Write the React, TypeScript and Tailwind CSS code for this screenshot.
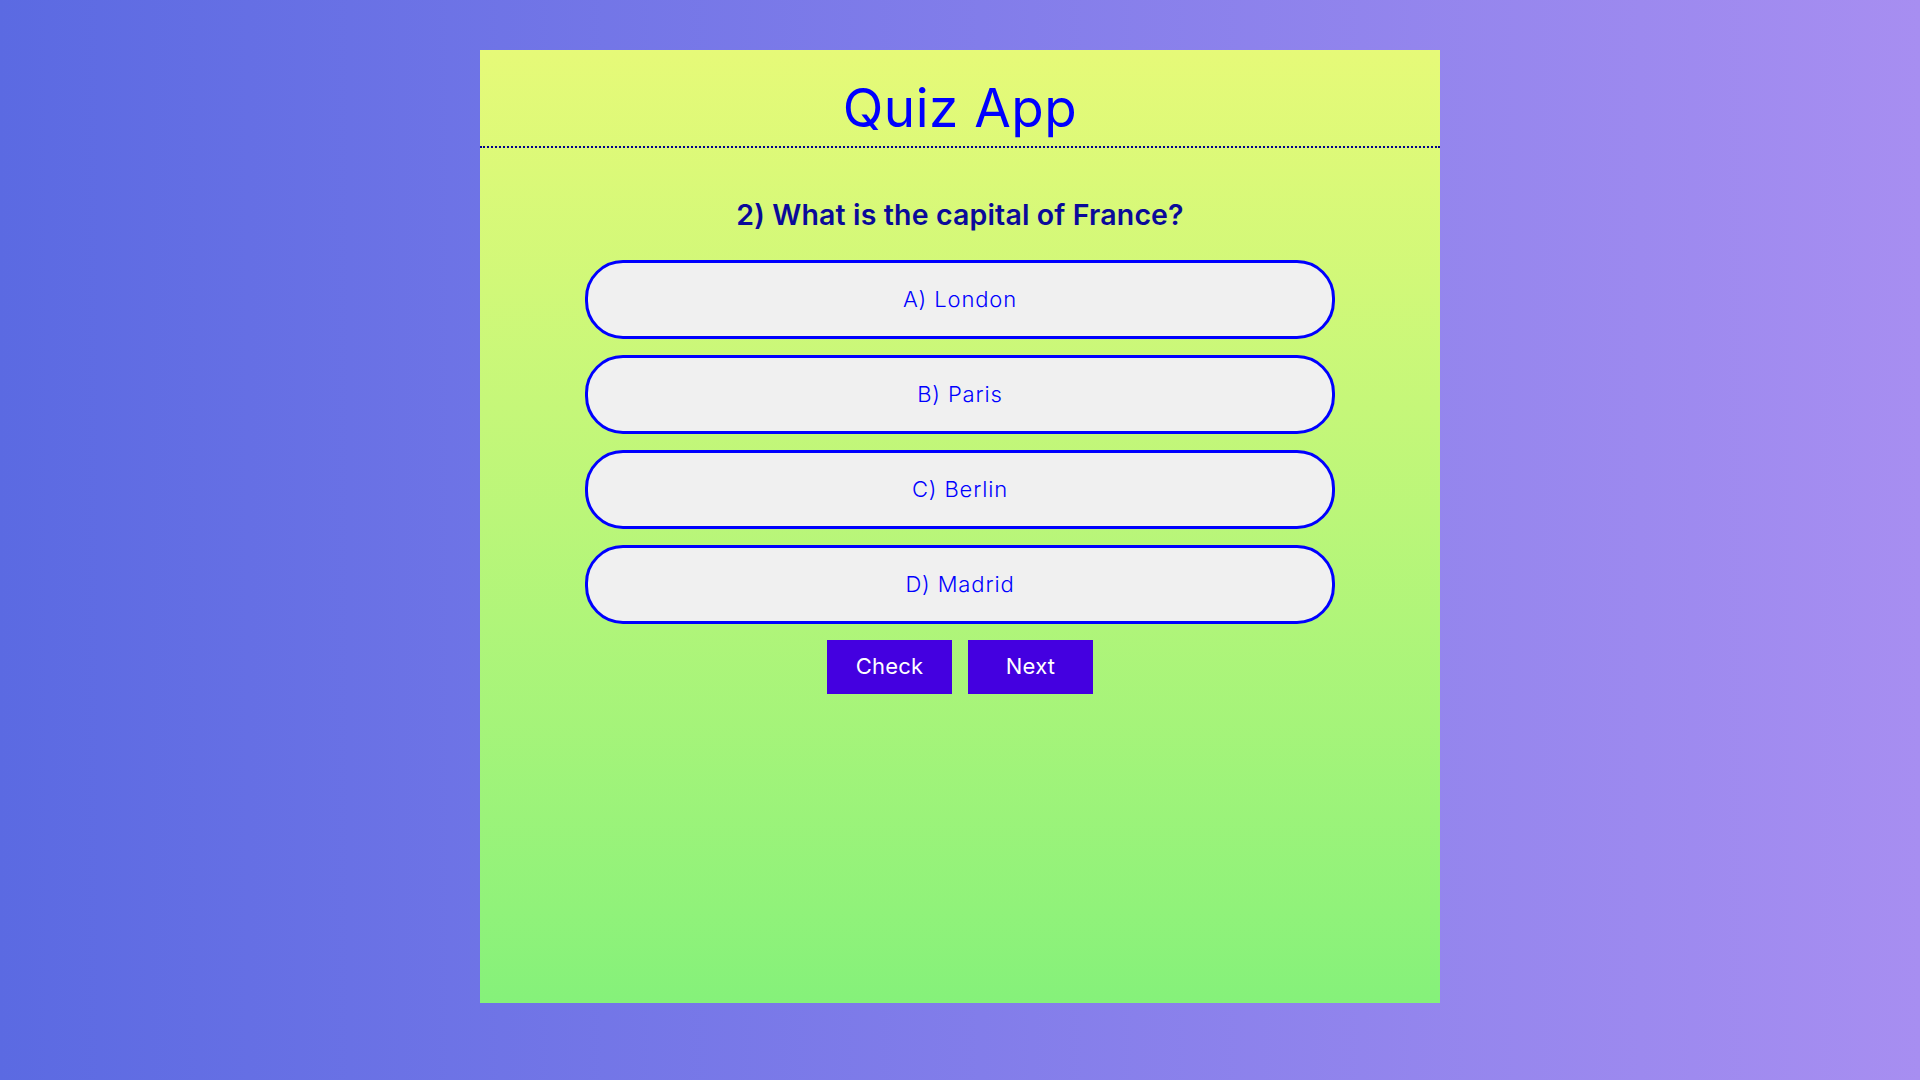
import React from "react";

const options = ["A) London", "B) Paris", "C) Berlin", "D) Madrid"];

export default function App() {
  return (
    <div
      className="min-h-screen w-full bg-linear-to-r from-[#5b6ae2] to-[#a78ef1] flex justify-center pt-[50px] pb-[77px]"
      style={{ fontFamily: "Inter, 'Noto Sans', sans-serif" }}
    >
      <div className="w-[960px] h-[953px] bg-linear-to-b from-[#e6fa78] to-[#85f17a]">
        <div className="h-[98px] pt-[20px] border-b-2 border-dotted border-[#00008b] flex items-center justify-center">
          <h1 className="text-[53px] leading-none text-[#0000ff] font-normal tracking-[0.01em]">Quiz App</h1>
        </div>
        <div className="flex flex-col items-center pt-[53px]">
          <h2 className="text-[28.5px] leading-none font-semibold text-[#0a0a9a] mb-[30px] tracking-[0.005em]">
            2) What is the capital of France?
          </h2>
          <div className="flex flex-col gap-[16px]">
            {options.map((o) => (
              <button
                key={o}
                className="w-[750px] h-[79px] rounded-[38px] border-[3px] border-[#0000ff] bg-[#f0f0f0] text-[#0000ff] text-[22px] font-light tracking-[0.04em]"
              >
                {o}
              </button>
            ))}
          </div>
          <div className="flex gap-[16px] mt-[16px]">
            <button className="w-[125px] h-[54px] bg-[#4400e0] text-white text-[22px] tracking-[0.01em]">Check</button>
            <button className="w-[125px] h-[54px] bg-[#4400e0] text-white text-[22px] tracking-[0.01em]">Next</button>
          </div>
        </div>
      </div>
    </div>
  );
}
